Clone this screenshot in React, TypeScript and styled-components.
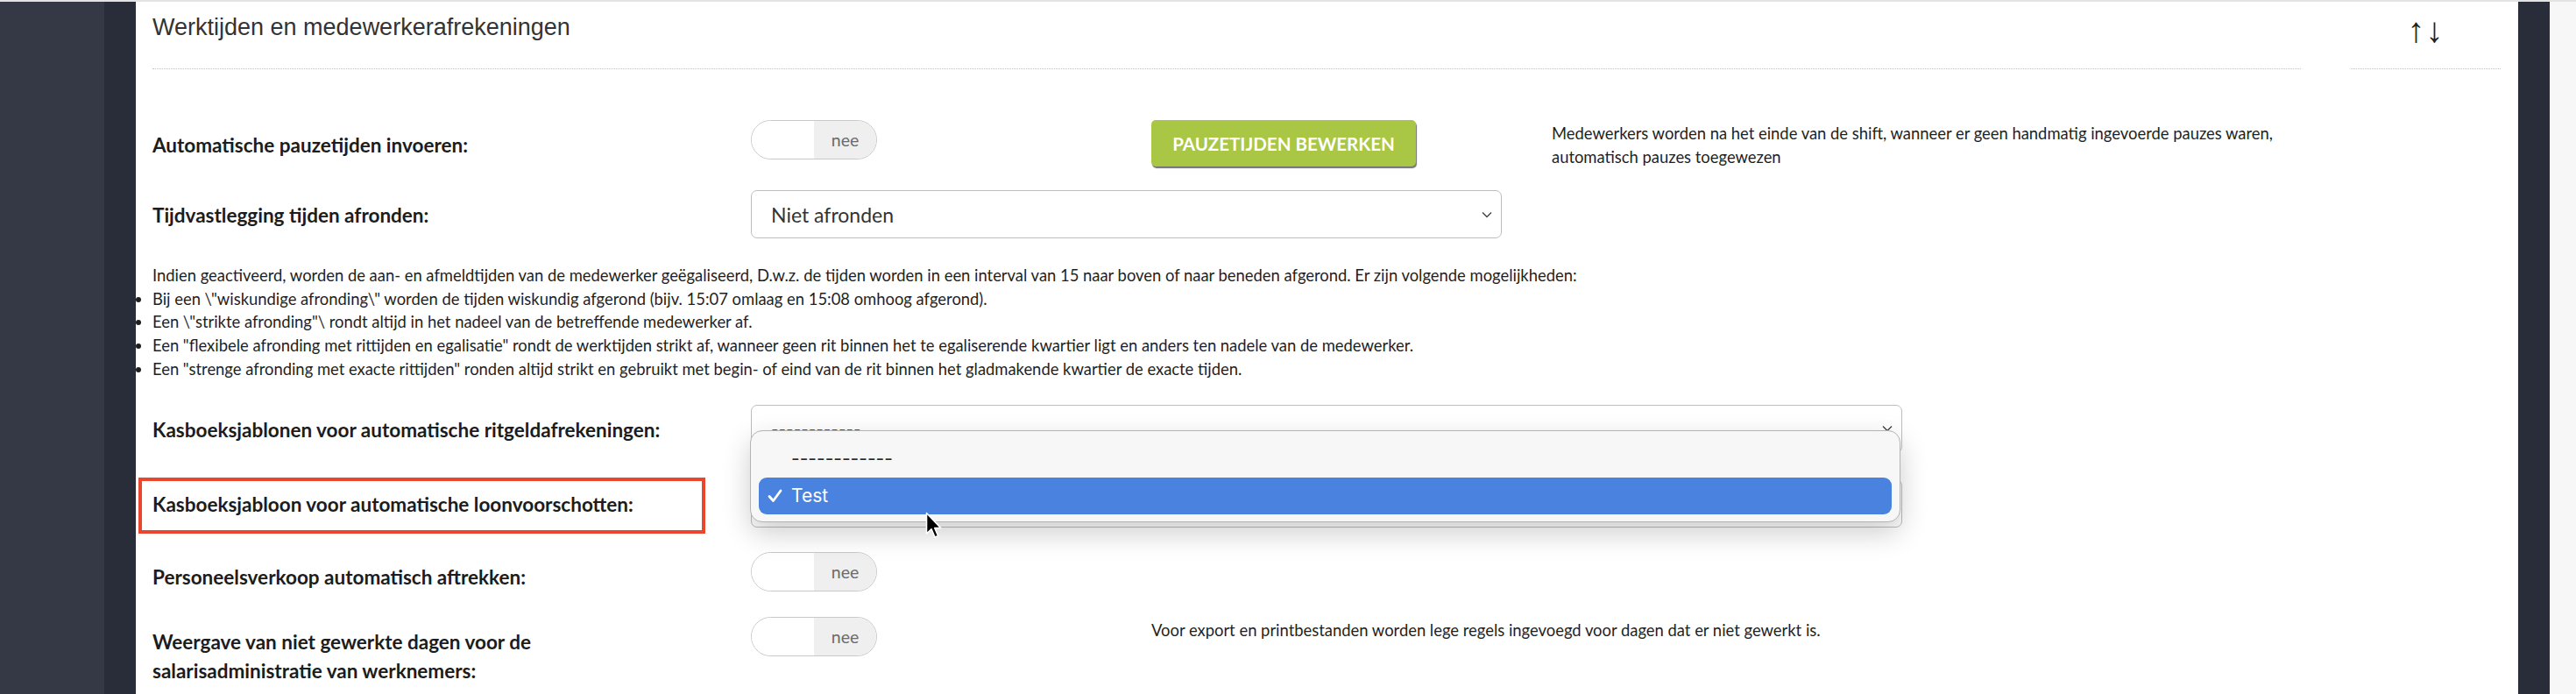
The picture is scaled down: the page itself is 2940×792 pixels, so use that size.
import React from 'react';
import styled, { createGlobalStyle, css } from 'styled-components';

const GlobalStyle = createGlobalStyle`
  html, body {
    margin: 0;
    padding: 0;
  }
  body {
    width: 2940px;
    height: 792px;
    overflow: hidden;
    background: #fff;
    font-family: Lato, 'Open Sans', sans-serif;
    color: #1f1f1f;
  }
`;

const Page = styled.div`
  display: flex;
  height: 792px;
  box-sizing: border-box;
  border-top: 2px solid #e3e3e3;
`;

const Sidebar = styled.div`
  width: 119px;
  background: #343945;
`;

const Gutter = styled.div`
  width: 36px;
  background: #282d39;
`;

const EdgeStrip = styled.div`
  width: 30px;
  background: #f7f7f7;
`;

const Main = styled.main`
  flex: 1;
  min-width: 0;
  padding: 0 20px 0 19px;
  background: #fff;
`;

const Header = styled.div`
  display: flex;
  gap: 57px;
`;

const TitleCell = styled.div`
  flex: 1;
  height: 77px;
  padding-top: 14px;
  box-sizing: border-box;
  border-bottom: 1px dotted #c2c2c2;
`;

const Title = styled.h2`
  margin: 0;
  font-family: 'Liberation Sans', Arial, sans-serif;
  font-weight: 400;
  font-size: 27px;
  line-height: 31px;
  color: #333;
`;

const SortCell = styled.div`
  width: 171px;
  height: 77px;
  box-sizing: border-box;
  padding-top: 10px;
  border-bottom: 1px dotted #c2c2c2;
  text-align: center;
  font-family: 'Liberation Sans', Arial, sans-serif;
  font-size: 40px;
  line-height: 44px;
  letter-spacing: 1px;
  color: #222;
`;

const FieldRow = styled.div<{ $top: number }>`
  display: grid;
  grid-template-columns: 626px repeat(4, 400px) 1fr;
  column-gap: 57px;
  align-items: start;
  margin-top: ${({ $top }) => $top}px;
`;

const FieldLabel = styled.div<{ $highlight?: boolean }>`
  grid-column: 1;
  position: relative;
  padding-top: 12px;
  font-weight: 700;
  font-size: 22.5px;
  line-height: 33px;
  color: #1c1c1c;

  ${({ $highlight }) =>
    $highlight &&
    css`
      &::after {
        content: '';
        position: absolute;
        left: -16px;
        right: -5px;
        top: -2px;
        bottom: -17px;
        border: 4px solid #e8462d;
        pointer-events: none;
      }
    `}
`;

const Switch = styled.div`
  grid-column: 2;
  display: flex;
  width: 144px;
  height: 45px;
  box-sizing: border-box;
  border: 1px solid #c9c9c9;
  border-radius: 23px;
  overflow: hidden;
`;

const SwitchHandle = styled.span`
  width: 71px;
  background: #fff;
`;

const SwitchText = styled.span`
  flex: 1;
  display: flex;
  align-items: center;
  justify-content: center;
  background: #efefef;
  color: #6b6b6b;
  font-size: 19.5px;
`;

const ActionButton = styled.button`
  grid-column: 3;
  width: 302px;
  height: 53px;
  border: none;
  border-radius: 5px;
  background: #a9c644;
  color: #fff;
  font-family: Lato, sans-serif;
  font-weight: 700;
  font-size: 20.5px;
  text-transform: uppercase;
  box-shadow: 1px 2px 1px rgba(0, 0, 0, 0.55);
`;

const Hint = styled.div<{ $col: number; $span: number }>`
  grid-column: ${({ $col }) => $col} / span ${({ $span }) => $span};
  padding-top: 2px;
  font-size: 18.4px;
  line-height: 27px;
  color: #1f1f1f;
`;

const SelectBox = styled.div<{ $span: number }>`
  grid-column: 2 / span ${({ $span }) => $span};
  position: relative;
  display: flex;
  align-items: center;
  justify-content: space-between;
  height: 55px;
  box-sizing: border-box;
  padding: 0 10px 0 22px;
  border: 1px solid #bdbdbd;
  border-radius: 7px;
  background: #fff;
  font-size: 23px;
  color: #333;
`;

const InfoBlock = styled.div`
  margin-top: 29px;
  font-size: 18.4px;
  line-height: 26.7px;
  color: #1f1f1f;
`;

const InfoLead = styled.p`
  margin: 0;
`;

const InfoList = styled.ul`
  margin: 0;
  padding: 0;
  list-style: disc outside;
`;

const Menu = styled.div`
  position: absolute;
  left: -2px;
  right: 1px;
  top: 28px;
  height: 105px;
  box-sizing: border-box;
  padding: 11px 9px 0;
  background: #f7f7f7;
  border: 1px solid #b3b3b3;
  border-radius: 14px;
  box-shadow: 0 12px 32px rgba(0, 0, 0, 0.2);
  font-family: Inter, 'Noto Sans', sans-serif;
  z-index: 5;
`;

const MenuItem = styled.div<{ $active?: boolean }>`
  position: relative;
  display: flex;
  align-items: center;
  height: 42px;
  padding-left: 37px;
  border-radius: 9px;
  font-size: 21px;
  color: #2a2a2a;

  ${({ $active }) =>
    $active &&
    css`
      background: #4a83df;
      color: #fff;
    `}
`;

const CheckMark = styled.svg`
  position: absolute;
  left: 10px;
  top: 13px;
`;

const Cursor = styled.svg`
  position: absolute;
  left: 199px;
  top: 92px;
  z-index: 6;
`;

const Chevron = () => (
  <svg width="12" height="8" viewBox="0 0 12 8">
    <path d="M1 1.5 L6 6.5 L11 1.5" fill="none" stroke="#444" strokeWidth="1.4" />
  </svg>
);

const Toggle: React.FC<{ label: string }> = ({ label }) => (
  <Switch>
    <SwitchHandle />
    <SwitchText>{label}</SwitchText>
  </Switch>
);

export default function App() {
  return (
    <>
      <GlobalStyle />
      <Page>
        <Sidebar />
        <Gutter />
        <Main>
          <Header>
            <TitleCell>
              <Title>Werktijden en medewerkerafrekeningen</Title>
            </TitleCell>
            <SortCell>↑↓</SortCell>
          </Header>

          <FieldRow $top={58}>
            <FieldLabel>Automatische pauzetijden invoeren:</FieldLabel>
            <Toggle label="nee" />
            <ActionButton>Pauzetijden bewerken</ActionButton>
            <Hint $col={4} $span={2}>
              Medewerkers worden na het einde van de shift, wanneer er geen handmatig ingevoerde pauzes
              waren, automatisch pauzes toegewezen
            </Hint>
          </FieldRow>

          <FieldRow $top={24}>
            <FieldLabel>Tijdvastlegging tijden afronden:</FieldLabel>
            <SelectBox $span={2}>
              <span>Niet afronden</span>
              <Chevron />
            </SelectBox>
          </FieldRow>

          <InfoBlock>
            <InfoLead>
              Indien geactiveerd, worden de aan- en afmeldtijden van de medewerker geëgaliseerd, D.w.z. de
              tijden worden in een interval van 15 naar boven of naar beneden afgerond. Er zijn volgende
              mogelijkheden:
            </InfoLead>
            <InfoList>
              <li>
                Bij een \"wiskundige afronding\" worden de tijden wiskundig afgerond (bijv. 15:07 omlaag en
                15:08 omhoog afgerond).
              </li>
              <li>Een \"strikte afronding"\ rondt altijd in het nadeel van de betreffende medewerker af.</li>
              <li>
                Een "flexibele afronding met rittijden en egalisatie" rondt de werktijden strikt af, wanneer
                geen rit binnen het te egaliserende kwartier ligt en anders ten nadele van de medewerker.
              </li>
              <li>
                Een "strenge afronding met exacte rittijden" ronden altijd strikt en gebruikt met begin- of
                eind van de rit binnen het gladmakende kwartier de exacte tijden.
              </li>
            </InfoList>
          </InfoBlock>

          <FieldRow $top={27}>
            <FieldLabel>Kasboeksjablonen voor automatische ritgeldafrekeningen:</FieldLabel>
            <SelectBox $span={3}>
              <span>------------</span>
              <Chevron />
              <Menu>
                <MenuItem>------------</MenuItem>
                <MenuItem $active>
                  <CheckMark width="17" height="16" viewBox="0 0 17 16">
                    <path
                      d="M2 8.5 L6.5 13.5 L15 2"
                      fill="none"
                      stroke="#fff"
                      strokeWidth="2.8"
                      strokeLinecap="round"
                      strokeLinejoin="round"
                    />
                  </CheckMark>
                  Test
                </MenuItem>
                <Cursor width="19" height="32" viewBox="0 0 19 32">
                  <path
                    d="M1.5 1.5 L1.5 25 L7 19.8 L11 29 L14.6 27.4 L10.8 18.6 L17.8 18.6 Z"
                    fill="#000"
                    stroke="#fff"
                    strokeWidth="1.6"
                    strokeLinejoin="round"
                  />
                </Cursor>
              </Menu>
            </SelectBox>
          </FieldRow>

          <FieldRow $top={30}>
            <FieldLabel $highlight>Kasboeksjabloon voor automatische loonvoorschotten:</FieldLabel>
            <SelectBox $span={3}>
              <span />
              <Chevron />
            </SelectBox>
          </FieldRow>

          <FieldRow $top={28}>
            <FieldLabel>Personeelsverkoop automatisch aftrekken:</FieldLabel>
            <Toggle label="nee" />
          </FieldRow>

          <FieldRow $top={29}>
            <FieldLabel>
              Weergave van niet gewerkte dagen voor de salarisadministratie van werknemers:
            </FieldLabel>
            <Toggle label="nee" />
            <Hint $col={3} $span={3}>
              Voor export en printbestanden worden lege regels ingevoegd voor dagen dat er niet gewerkt is.
            </Hint>
          </FieldRow>
        </Main>
        <Gutter />
        <EdgeStrip />
      </Page>
    </>
  );
}
